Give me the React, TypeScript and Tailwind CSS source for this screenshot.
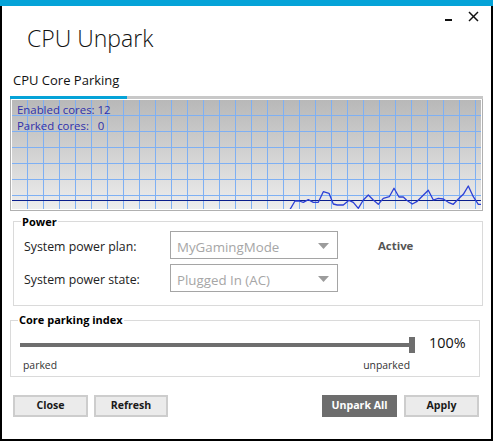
import React from "react";

const cpu: [number, number][] = [
  [290, 209.5], [295, 201], [299.3, 201], [303.3, 202.3], [308.3, 199.7], [313.3, 202.3],
  [318.3, 202.3], [323.3, 191.7], [329, 193.3], [333.3, 204], [337.3, 205], [343.3, 205],
  [349, 200.3], [353.3, 202.3], [358.3, 208.3], [363.3, 200], [368.3, 195], [373.3, 200],
  [378.3, 204.3], [383.3, 198.3], [389.3, 196.7], [394, 188.3], [399, 197], [403.3, 197],
  [406.7, 200.3], [412.3, 204], [416.7, 201.7], [421.7, 196.7], [428.3, 190.3], [433.3, 200],
  [438.3, 198.3], [443.3, 199], [448.3, 202.3], [453.3, 204.3], [458.3, 199], [463.3, 194.3],
  [468.3, 186], [473.3, 196.7], [478.3, 204.3], [481, 204.3],
];

function Chart() {
  const vlines = Array.from({ length: 29 }, (_, k) => 27 + 16 * k);
  const hlines = [115, 131, 147, 163, 179, 195];
  return (
    <div className="ml-[8px] w-[473px] h-[112px] border-x border-b border-[#b0b0b0] bg-white p-px">
      <div className="relative w-full h-full bg-linear-to-b from-[#b8b8b8] to-[#eeeeee]">
        <svg width="469" height="109" className="absolute left-0 top-0 block">
          <g transform="translate(-12,-100)">
            {vlines.map((x) => (
              <line key={"v" + x} x1={x + 0.5} y1={100} x2={x + 0.5} y2={209} stroke="#7eb0f4" strokeWidth={1} />
            ))}
            {hlines.map((y) => (
              <line key={"h" + y} x1={12} y1={y + 0.5} x2={481} y2={y + 0.5} stroke="#7eb0f4" strokeWidth={1} />
            ))}
            <line x1={12} y1={200.5} x2={481} y2={200.5} stroke="#0b1e8c" strokeWidth={1.2} />
            <polyline
              points={cpu.map((p) => p.join(",")).join(" ")}
              fill="none"
              stroke="#2b3fd6"
              strokeWidth={1.3}
              strokeLinejoin="round"
            />
          </g>
        </svg>
        <div className="absolute left-[5px] top-[2px] text-[11.4px] leading-[16px] text-[#3030aa] whitespace-pre">
          <div>Enabled cores: 12</div>
          <div>Parked cores:   0</div>
        </div>
      </div>
    </div>
  );
}

function Combo({ value }: { value: string }) {
  return (
    <div className="w-[168px] h-[28px] border border-[#a5a5a5] flex items-center pt-[3px] pl-[6px] pr-[8px] bg-white">
      <span className="flex-1 text-[13.3px] text-[#a6a6a6] leading-[16px]">{value}</span>
      <svg width="11" height="6" className="block -mt-[1px]">
        <polygon points="0,0 11,0 5.5,6" fill="#9c9c9c" />
      </svg>
    </div>
  );
}

function Row({ label, value }: { label: string; value: string }) {
  return (
    <div className="flex items-start h-[28px]">
      <div className="w-[156px] pl-[10px] pt-[8px] text-[12.3px] leading-[16px] text-[#222]">{label}</div>
      <Combo value={value} />
    </div>
  );
}

function Btn({ children, w, dark }: { children: React.ReactNode; w: string; dark?: boolean }) {
  return (
    <div
      className={
        "h-[22px] flex items-center justify-center text-[10.6px] font-bold " +
        w +
        (dark ? " bg-[#6d6d6d] text-white" : " bg-[#ebebeb] border-2 border-[#cdcdcd] text-[#1a1a1a]")
      }
    >
      {children}
    </div>
  );
}

export default function App() {
  return (
    <div className="relative w-[493px] h-[441px] flex flex-col bg-white font-['Open_Sans','Noto_Sans',sans-serif]">
      <div className="h-[6px] shrink-0 bg-[#05a3d8]" />
      <div className="flex-1 flex flex-col border-x-2 border-b-2 border-black">
        <div className="h-[48px] pt-[16px] pl-[25px]">
          <div className="text-[23px] font-light leading-[32px] text-[#111]">CPU Unpark</div>
        </div>
        <div className="mt-[17px] ml-[11px] text-[13px] leading-[18px] text-[#111]">CPU Core Parking</div>
        <div className="mt-[7px] ml-[8px] w-[473px] h-[3px] flex">
          <div className="w-[117px] bg-[#05a3d8]" />
          <div className="flex-1 bg-[#c8c8c8]" />
        </div>
        <Chart />
        <div className="relative ml-[11px] mt-[10px] w-[470px] h-[85px] border border-[#dadada]">
          <span className="absolute left-[7px] top-[-7px] bg-white px-px text-[11px] font-bold leading-[14px] text-black">
            Power
          </span>
          <div className="flex pt-[9px]">
            <div className="flex flex-col gap-[5px]">
              <Row label="System power plan:" value="MyGamingMode" />
              <Row label="System power state:" value="Plugged In (AC)" />
            </div>
            <div className="ml-[40px] pt-[8px] text-[11.4px] leading-[14px] font-bold text-[#555]">Active</div>
          </div>
        </div>
        <div className="relative ml-[8px] mt-[14px] w-[470px] h-[57px] border border-[#dadada]">
          <span className="absolute left-[7px] top-[-8px] bg-white px-px text-[11px] font-bold leading-[14px] text-black">
            Core parking index
          </span>
          <div className="flex items-center pt-[16px] pl-[9px]">
            <div className="w-[389px] h-[4px] bg-[#6e6e6e]" />
            <div className="w-[6px] h-[16px] bg-[#6e6e6e]" />
            <span className="ml-[14px] -mt-[4px] text-[14.4px] leading-[16px] text-[#111]">100%</span>
          </div>
          <div className="flex justify-between w-[387px] ml-[12px] mt-[5px] text-[10.4px] leading-[14px] text-[#333]">
            <span>parked</span>
            <span>unparked</span>
          </div>
        </div>
        <div className="flex mt-[18px] ml-[11px] mr-[12px] justify-between">
          <div className="flex gap-[6px]">
            <Btn w="w-[75px]">Close</Btn>
            <Btn w="w-[74px]">Refresh</Btn>
          </div>
          <div className="flex gap-[7px]">
            <Btn w="w-[75px]" dark>
              Unpark All
            </Btn>
            <Btn w="w-[75px]">Apply</Btn>
          </div>
        </div>
      </div>
      <div className="absolute left-[445px] top-[19px] w-[7px] h-[2px] bg-[#111]" />
      <svg width="11" height="11" className="absolute left-[468px] top-[11px] block">
        <line x1="1" y1="1" x2="10" y2="10" stroke="#111" strokeWidth="1.5" />
        <line x1="10" y1="1" x2="1" y2="10" stroke="#111" strokeWidth="1.5" />
      </svg>
    </div>
  );
}
